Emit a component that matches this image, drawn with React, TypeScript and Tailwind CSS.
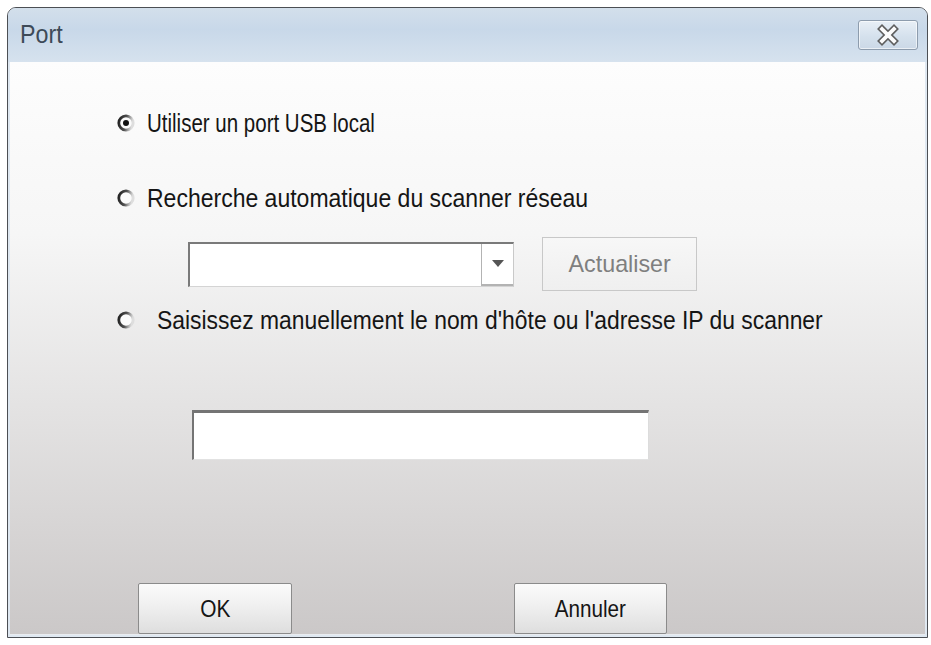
import React from "react";

const FONT = { fontFamily: '"Liberation Sans", Arial, sans-serif' };

function Radio({ checked }: { checked?: boolean }) {
  const id = checked ? "rg1" : "rg0";
  return (
    <svg width="18" height="18" viewBox="0 0 18 18" className="shrink-0">
      <defs>
        <linearGradient id={id} x1="0" y1="0" x2="1" y2="0.2">
          <stop offset="0" stopColor="#1f1f1f" />
          <stop offset="0.55" stopColor="#505050" />
          <stop offset="0.85" stopColor="#b5b5b5" />
          <stop offset="1" stopColor="#dedede" />
        </linearGradient>
      </defs>
      <circle cx="9" cy="9" r="7.2" fill="#fbfbfb" stroke={`url(#${id})`} strokeWidth="2.8" />
      {checked && <circle cx="9" cy="9" r="3" fill="#111" />}
    </svg>
  );
}

function CloseIcon() {
  return (
    <svg width="24" height="22" viewBox="0 0 24 22">
      <line x1="6" y1="5" x2="18" y2="17" stroke="#5e5e5e" strokeWidth="7" strokeLinecap="square" />
      <line x1="18" y1="5" x2="6" y2="17" stroke="#5e5e5e" strokeWidth="7" strokeLinecap="square" />
      <line x1="6" y1="5" x2="18" y2="17" stroke="#fbfbfb" strokeWidth="3.8" strokeLinecap="square" />
      <line x1="18" y1="5" x2="6" y2="17" stroke="#fbfbfb" strokeWidth="3.8" strokeLinecap="square" />
    </svg>
  );
}

export default function App() {
  return (
    <div className="w-[931px] h-[645px] bg-white pt-[7px] pl-[7px]" style={FONT}>
      <div className="w-[921px] h-[631px] flex flex-col rounded-t-[9px] border border-[#4c4f54] bg-[#dfe8f1] overflow-hidden">
        {/* title bar */}
        <div className="h-[54px] shrink-0 flex items-center justify-between pl-[12px] pr-[9px] bg-[linear-gradient(180deg,#d3dfeb_0%,#c8d8e9_40%,#d6e2ee_100%)]">
          <span className="inline-block origin-left scale-x-[0.93] text-[25px] text-[#3d4a58]">Port</span>
          <div className="w-[60px] h-[30px] mt-[-1px] flex items-center justify-center rounded-[3px] border border-[#8d9cad] bg-[linear-gradient(180deg,#e8eff6_0%,#d5e1ed_55%,#cbd8e6_100%)] shadow-[inset_0_0_0_1px_rgba(255,255,255,0.6)]">
            <CloseIcon />
          </div>
        </div>

        {/* content */}
        <div className="flex-1 mx-[2px] mb-[4px] flex flex-col bg-[linear-gradient(180deg,#fdfdfd_0%,#f6f6f6_30%,#e4e3e3_60%,#cbc8c8_100%)] border-b border-[#e9ecf0] text-[#151515]">
          <div className="h-[30px] mt-[46px] ml-[107px] flex items-center gap-[12px]">
            <Radio checked />
            <span className="inline-block origin-left scale-x-[0.82] text-[25px] leading-none">Utiliser un port USB local</span>
          </div>

          <div className="h-[30px] mt-[45px] ml-[107px] flex items-center gap-[12px]">
            <Radio />
            <span className="inline-block origin-left scale-x-[0.92] text-[25px] leading-none">Recherche automatique du scanner réseau</span>
          </div>

          <div className="mt-[24px] ml-[178px] flex items-center gap-[28px]">
            <div className="w-[326px] h-[45px] flex bg-white border-t-2 border-l-2 border-[#7a7a7a] border-r border-b border-r-[#c9c9c9] border-b-[#d4d4d4]">
              <div className="flex-1" />
              <div className="w-[32px] flex items-center justify-center border-l border-b-2 border-[#b3b3b3]">
                <svg width="12" height="7" viewBox="0 0 12 7">
                  <polygon points="0,0 12,0 6,7" fill="#555" />
                </svg>
              </div>
            </div>
            <div className="w-[155px] h-[54px] flex items-center justify-center border border-[#c8c8c8] bg-[linear-gradient(180deg,#f7f7f7_0%,#efefef_100%)]">
              <span className="inline-block scale-x-[0.97] text-[24px] text-[#7f7f7f]">Actualiser</span>
            </div>
          </div>

          <div className="h-[30px] mt-[14px] ml-[107px] flex items-center gap-[22px]">
            <Radio />
            <span className="inline-block origin-left scale-x-[0.915] text-[25px] leading-none">Saisissez manuellement le nom d'hôte ou l'adresse IP du scanner</span>
          </div>

          <div className="mt-[75px] ml-[182px] w-[457px] h-[50px] bg-white border-t-[3px] border-l-2 border-[#747474] border-r border-b border-r-[#dcdcdc] border-b-[#e2e2e2]" />

          <div className="mt-[123px] ml-[128px] flex gap-[222px]">
            <div className="w-[154px] h-[51px] flex items-center justify-center rounded-[2px] border border-[#8b8b8b] bg-[linear-gradient(180deg,#fbfbfb_0%,#eeeeee_50%,#dedede_100%)]">
              <span className="inline-block scale-x-[0.87] text-[24px]">OK</span>
            </div>
            <div className="w-[153px] h-[51px] flex items-center justify-center rounded-[2px] border border-[#8b8b8b] bg-[linear-gradient(180deg,#fbfbfb_0%,#eeeeee_50%,#dedede_100%)]">
              <span className="inline-block scale-x-[0.86] text-[24px]">Annuler</span>
            </div>
          </div>
        </div>
      </div>
    </div>
  );
}
